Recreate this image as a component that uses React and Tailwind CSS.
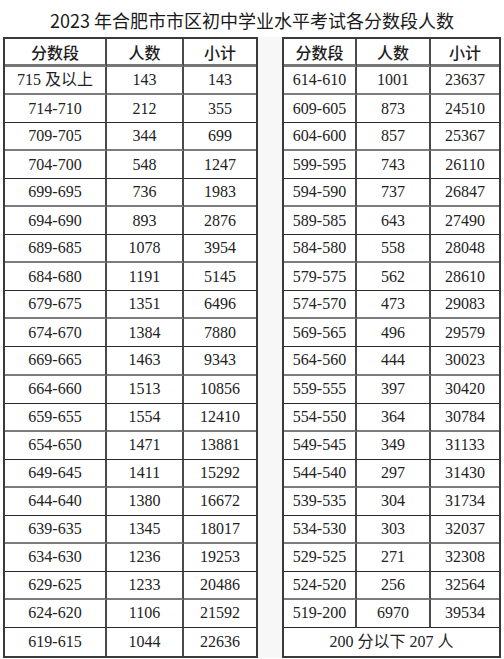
import React from 'react';

// 左表：分数段 / 人数 / 小计
const leftRows = [
  ['715 及以上', '143', '143'],
  ['714-710', '212', '355'],
  ['709-705', '344', '699'],
  ['704-700', '548', '1247'],
  ['699-695', '736', '1983'],
  ['694-690', '893', '2876'],
  ['689-685', '1078', '3954'],
  ['684-680', '1191', '5145'],
  ['679-675', '1351', '6496'],
  ['674-670', '1384', '7880'],
  ['669-665', '1463', '9343'],
  ['664-660', '1513', '10856'],
  ['659-655', '1554', '12410'],
  ['654-650', '1471', '13881'],
  ['649-645', '1411', '15292'],
  ['644-640', '1380', '16672'],
  ['639-635', '1345', '18017'],
  ['634-630', '1236', '19253'],
  ['629-625', '1233', '20486'],
  ['624-620', '1106', '21592'],
  ['619-615', '1044', '22636'],
];

const rightRows = [
  ['614-610', '1001', '23637'],
  ['609-605', '873', '24510'],
  ['604-600', '857', '25367'],
  ['599-595', '743', '26110'],
  ['594-590', '737', '26847'],
  ['589-585', '643', '27490'],
  ['584-580', '558', '28048'],
  ['579-575', '562', '28610'],
  ['574-570', '473', '29083'],
  ['569-565', '496', '29579'],
  ['564-560', '444', '30023'],
  ['559-555', '397', '30420'],
  ['554-550', '364', '30784'],
  ['549-545', '349', '31133'],
  ['544-540', '297', '31430'],
  ['539-535', '304', '31734'],
  ['534-530', '303', '32037'],
  ['529-525', '271', '32308'],
  ['524-520', '256', '32564'],
  ['519-200', '6970', '39534'],
];

const serif = { fontFamily: '"Liberation Serif", "Noto Sans CJK SC", serif' };

// 行分隔线：粗灰 / 细黑 交替
const lineFor = (i) =>
  i % 2 === 0 ? 'border-b-2 border-b-[#7c7c7c]' : 'border-b border-b-[#2a2a2a]';

const HeaderCell = ({ children, last }) => (
  <div
    className={`h-[28px] flex items-center justify-center text-[16px] font-medium text-[#1e1e1e] border-b-[3px] border-b-[#777] ${
      last ? '' : 'border-r-2 border-r-[#4a4a4a]'
    }`}
    style={{ fontFamily: '"Noto Sans CJK SC", sans-serif' }}
  >
    {children}
  </div>
);

const Cell = ({ children, last, line }) => (
  <div
    className={`h-[28.05px] flex items-center justify-center text-[16px] text-[#222] ${line} ${
      last ? '' : 'border-r-2 border-r-[#4a4a4a]'
    }`}
    style={serif}
  >
    {children}
  </div>
);

const ScoreTable = ({ rows, cols, footer }) => (
  <div className={`grid ${cols} border-2 border-[#3a3a3a]`}>
    <HeaderCell>分数段</HeaderCell>
    <HeaderCell>人数</HeaderCell>
    <HeaderCell last>小计</HeaderCell>
    {rows.map((row, i) => {
      const line = i === rows.length - 1 && !footer ? '' : lineFor(i);
      return (
        <React.Fragment key={row[0]}>
          <Cell line={line}>{row[0]}</Cell>
          <Cell line={line}>{row[1]}</Cell>
          <Cell line={line} last>{row[2]}</Cell>
        </React.Fragment>
      );
    })}
    {footer && (
      <div
        className="col-span-3 h-[28.05px] flex items-center justify-center text-[16px] text-[#222]"
        style={serif}
      >
        {footer}
      </div>
    )}
  </div>
);

export default function App() {
  return (
    <div className="w-[504px] h-[659px] bg-white overflow-hidden">
      <div
        className="h-[37px] flex items-center justify-center pt-[3px] text-[18px] text-[#1a1a1a]"
        style={{ fontFamily: '"Noto Sans CJK SC", "Noto Sans", sans-serif' }}
      >
        2023 年合肥市市区初中学业水平考试各分数段人数
      </div>
      <div className="flex pl-[3px]">
        <div className="w-[255px]">
          <ScoreTable rows={leftRows} cols="grid-cols-[102px_77px_72px]" />
        </div>
        <div className="w-[24px] bg-[#f7f7f7]" />
        <div className="w-[219px]">
          <ScoreTable
            rows={rightRows}
            cols="grid-cols-[73px_74px_68px]"
            footer="200 分以下 207 人"
          />
        </div>
      </div>
    </div>
  );
}
